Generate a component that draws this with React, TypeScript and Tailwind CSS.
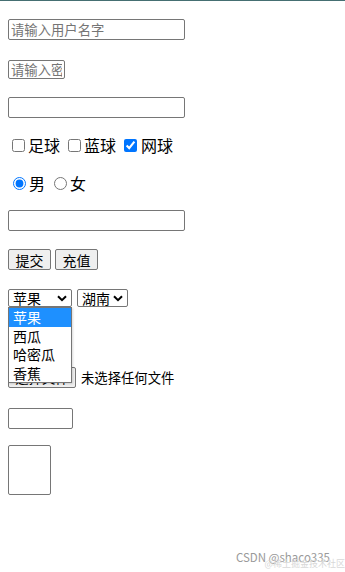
import React from "react";

const font = "font-['Microsoft_YaHei','Noto_Sans_CJK_SC',sans-serif]";
const box = "block border border-[#767676] rounded-[2px] bg-white px-[2px] text-[13.33px] text-black outline-none placeholder:text-[#757575]";

function Chevron() {
  return (
    <svg width="10" height="7" viewBox="0 0 10 7" className="shrink-0">
      <path d="M1 1.2 L5 5.2 L9 1.2" fill="none" stroke="#000" strokeWidth="2" />
    </svg>
  );
}

function FakeSelect({ label, width }: { label: string; width: string }) {
  return (
    <div
      className={`${width} h-[18px] flex items-center justify-between border border-[#767676] rounded-[2px] bg-white pl-[4px] pr-[4px] text-[14px] leading-none`}
    >
      <span>{label}</span>
      <Chevron />
    </div>
  );
}

export default function App() {
  const fruits = ["苹果", "西瓜", "哈密瓜", "香蕉"];

  return (
    <div className={`relative w-full h-[572px] bg-white text-black ${font}`}>
      <div className="h-px bg-[#456f72]" />

      <div className="px-2">
        <input placeholder="请输入用户名字" className={`${box} w-[177px] h-[21px] mt-[18px]`} />
        <input placeholder="请输入密码" className={`${box} w-[57px] h-[19px] mt-[20px]`} />
        <input className={`${box} w-[177px] h-[21px] mt-[18px]`} />

        <div className="h-[20px] mt-[17px] flex items-center text-[16px] leading-none">
          <input type="checkbox" className="w-[13px] h-[13px] ml-[4px] mr-[3px]" />
          <span>足球</span>
          <input type="checkbox" className="w-[13px] h-[13px] ml-[8px] mr-[3px]" />
          <span>蓝球</span>
          <input type="checkbox" defaultChecked className="w-[13px] h-[13px] ml-[8px] mr-[4px] accent-[#0075ff]" />
          <span>网球</span>
        </div>

        <div className="h-[20px] mt-[18px] flex items-center text-[16px] leading-none">
          <input type="radio" name="sex" defaultChecked className="w-[13px] h-[13px] ml-[5px] mr-[3px] accent-[#0075ff]" />
          <span>男</span>
          <input type="radio" name="sex" className="w-[13px] h-[13px] ml-[9px] mr-[3px]" />
          <span>女</span>
        </div>

        <input className={`${box} w-[177px] h-[21px] mt-[17px]`} />

        <div className="flex gap-[4px] mt-[18px]">
          <button className="w-[43px] h-[21px] border border-[#767676] rounded-[2px] bg-[#efefef] text-[14px] leading-none">
            提交
          </button>
          <button className="w-[43px] h-[21px] border border-[#767676] rounded-[2px] bg-[#efefef] text-[14px] leading-none">
            充值
          </button>
        </div>

        <div className="relative mt-[19px]">
          <div className="flex gap-[5px]">
            <FakeSelect label="苹果" width="w-[64px]" />
            <FakeSelect label="湖南" width="w-[51px]" />
          </div>

          <div className="flex items-center mt-[60px] h-[21px]">
            <button className="w-[68px] h-[21px] border border-[#767676] rounded-[2px] bg-[#efefef] text-[13.33px] leading-none">
              选择文件
            </button>
            <span className="ml-[5px] text-[13.33px]">未选择任何文件</span>
          </div>

          <ul className="absolute left-0 top-[18px] w-[64px] border border-[#767676] bg-white text-[14px] leading-none shadow-[1px_1px_2px_rgba(0,0,0,0.15)]">
            {fruits.map((f, i) => (
              <li
                key={f}
                className={`h-[18.5px] flex items-center pl-[4px] ${i === 0 ? "bg-[#1e90ff] text-white" : ""}`}
              >
                {f}
              </li>
            ))}
          </ul>
        </div>

        <input className={`${box} w-[65px] h-[21px] mt-[20px]`} />
        <textarea className={`${box} w-[43px] h-[50px] mt-[16px] resize-none`} />
      </div>

      <div className="absolute right-[15px] bottom-[9px] text-[11.5px] text-[#9a9a9a] leading-none">
        CSDN @shaco335
      </div>
      <div className="absolute right-0 bottom-[4px] text-[9px] text-[#d8d8d8] leading-none">
        @稀土掘金技术社区
      </div>
    </div>
  );
}
